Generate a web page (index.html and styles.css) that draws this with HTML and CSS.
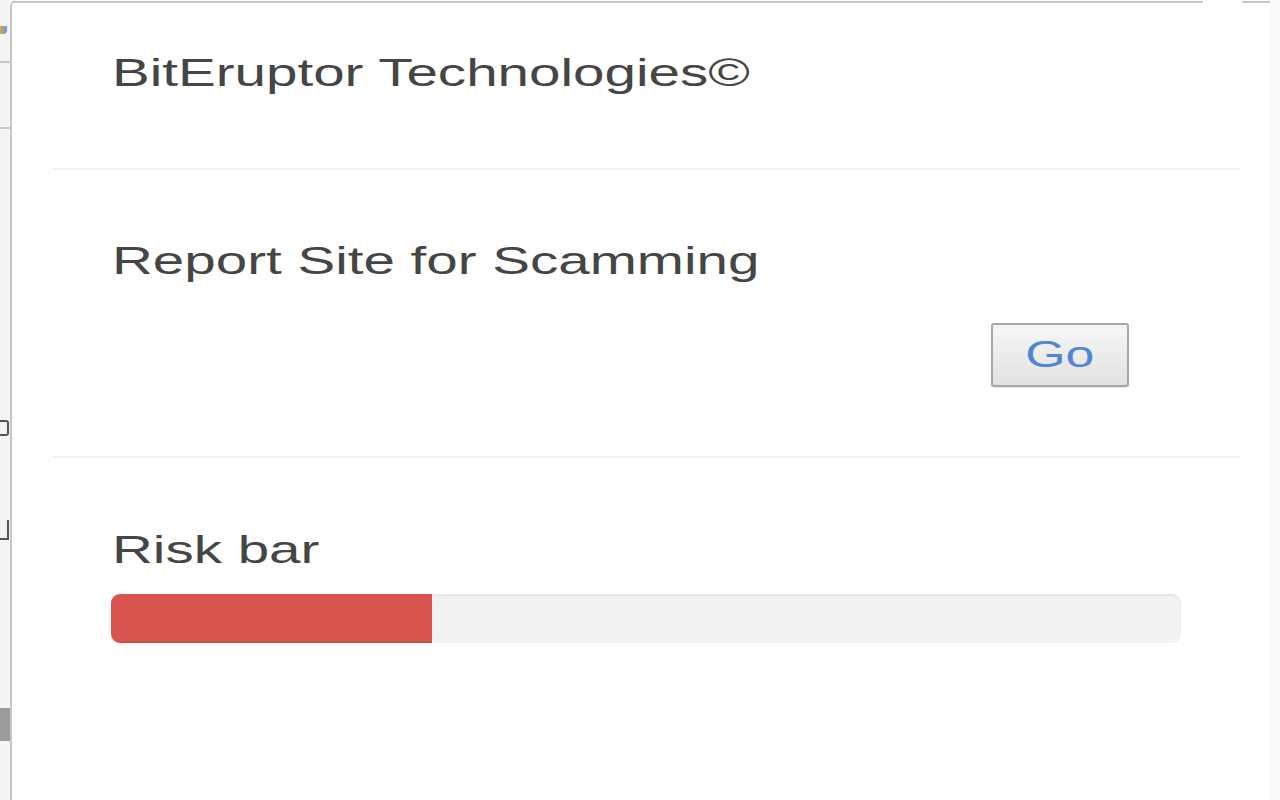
FILE: index.html
```html
<!DOCTYPE html>
<html>
<head>
<meta charset="utf-8">
<link rel="stylesheet" href="styles.css">
</head>
<body>
<div class="screen">
  <div class="page-strip">
    <div class="ps-mark ps-color"></div>
    <div class="ps-line ps-line1"></div>
    <div class="ps-line ps-line2"></div>
    <div class="ps-frag ps-g1"></div>
    <div class="ps-frag ps-g2"></div>
    <div class="ps-block"></div>
  </div>
  <div class="popup">
    <div class="top-edge">
      <div class="edge-seg edge-left"></div>
      <div class="edge-gap"></div>
      <div class="edge-seg edge-right"></div>
    </div>
    <div class="content">
      <div class="section">
        <div class="label"><span class="stretch">BitEruptor Technologies©</span></div>
      </div>
      <div class="divider div1"></div>
      <div class="section">
        <div class="label lbl2"><span class="stretch">Report Site for Scamming</span></div>
        <div class="btn-row">
          <button class="go-btn"><span class="stretch-c">Go</span></button>
        </div>
      </div>
      <div class="divider div2"></div>
      <div class="section">
        <div class="label lbl3"><span class="stretch">Risk bar</span></div>
        <div class="progress">
          <div class="progress-fill" style="width: 30%"></div>
        </div>
      </div>
    </div>
  </div>
  <div class="right-strip"></div>
</div>
</body>
</html>
```

FILE: styles.css
```css
html, body {
  margin: 0;
  padding: 0;
  width: 1280px;
  height: 800px;
  overflow: hidden;
  background: #ffffff;
}

.screen {
  display: flex;
  width: 1280px;
  height: 800px;
  font-family: "Liberation Sans", Arial, sans-serif;
}

.page-strip {
  position: relative;
  width: 10px;
  flex: 0 0 10px;
  background: #f4f4f4;
  overflow: hidden;
}

.ps-color {
  position: absolute;
  left: 0;
  top: 26px;
  width: 7px;
  height: 8px;
  background: linear-gradient(90deg, #e8a040, #5aa0e0);
  border-radius: 0 0 4px 0;
}

.ps-line {
  position: absolute;
  left: 0;
  width: 10px;
  height: 2px;
  background: #c8c8c8;
}

.ps-line1 { top: 61px; }
.ps-line2 { top: 127px; }

.ps-frag {
  position: absolute;
  left: 0;
  width: 7px;
  border: 2px solid #555;
  border-left: none;
}

.ps-g1 {
  top: 420px;
  height: 12px;
  border-radius: 0 3px 3px 0;
}

.ps-g2 {
  top: 520px;
  height: 18px;
  border-top: none;
  border-right: 2px solid #555;
  border-bottom: 2px solid #555;
}

.ps-block {
  position: absolute;
  left: 0;
  top: 708px;
  width: 10px;
  height: 33px;
  background: #9c9c9c;
}

.popup {
  width: 1260px;
  flex: 0 0 1260px;
  border-left: 2px solid #c6c6c6;
  border-top-left-radius: 6px;
  background: #ffffff;
  box-sizing: border-box;
  display: flex;
  flex-direction: column;
}

.top-edge {
  display: flex;
  height: 4px;
  margin-top: 1px;
}

.edge-seg {
  height: 2px;
  background: #c6c6c6;
}

.edge-left {
  width: 1191px;
  border-top-left-radius: 6px;
  border-bottom-right-radius: 3px;
}

.edge-gap {
  width: 39px;
}

.edge-right {
  flex: 1;
  border-bottom-left-radius: 3px;
}

.content {
  display: flex;
  flex-direction: column;
  padding-top: 44px;
}

.section {
  display: flex;
  flex-direction: column;
  margin-left: 99px;
  width: 1070px;
}

.label {
  height: 48px;
  font-size: 39px;
  line-height: 48px;
  color: #454545;
  padding-left: 1px;
  white-space: nowrap;
}

.stretch {
  display: inline-block;
  transform: scaleX(1.45);
  transform-origin: left center;
}

.stretch-c {
  display: inline-block;
  transform: scaleX(1.4);
  transform-origin: center center;
}

.divider {
  margin-left: 40px;
  width: 1188px;
  height: 2px;
  background: #efefef;
}

.div1 { margin-top: 71px; }
.div2 { margin-top: 69px; }

.lbl2 { margin-top: 67px; }
.lbl3 { margin-top: 68px; }

.btn-row {
  display: flex;
  justify-content: flex-end;
  padding-right: 52px;
  margin-top: 38px;
}

.go-btn {
  width: 138px;
  height: 64px;
  box-sizing: border-box;
  border: 2px solid #a8a8a8;
  border-radius: 3px;
  background: linear-gradient(#f6f6f6, #e2e2e2);
  font-family: "Liberation Sans", Arial, sans-serif;
  font-size: 37px;
  line-height: 60px;
  color: #4f86d4;
  padding: 0;
  box-shadow: 0 1px 1px rgba(0,0,0,0.1);
}

.progress {
  margin-top: 20px;
  height: 49px;
  background: #f3f3f3;
  border-radius: 9px;
  box-shadow: inset 0 2px 3px rgba(0,0,0,0.06);
  overflow: hidden;
  display: flex;
}

.progress-fill {
  height: 100%;
  background: #d9534f;
  box-shadow: inset 0 -2px 0 rgba(0,0,0,0.08);
}

.right-strip {
  flex: 1;
  background: #fafafa;
}
```
